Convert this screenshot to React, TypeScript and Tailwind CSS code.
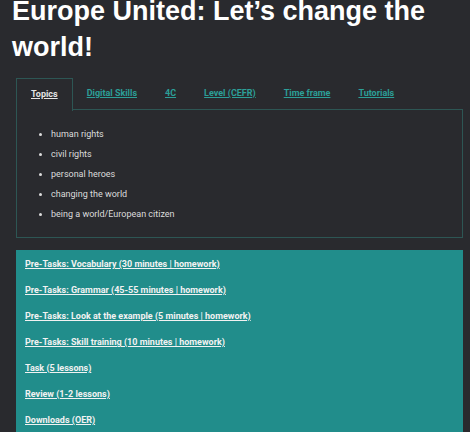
import React from "react";

const tabs = ["Topics", "Digital Skills", "4C", "Level (CEFR)", "Time frame", "Tutorials"];
const topics = [
  "human rights",
  "civil rights",
  "personal heroes",
  "changing the world",
  "being a world/European citizen",
];
const links = [
  "Pre-Tasks: Vocabulary (30 minutes | homework)",
  "Pre-Tasks: Grammar (45-55 minutes | homework)",
  "Pre-Tasks: Look at the example (5 minutes | homework)",
  "Pre-Tasks: Skill training (10 minutes | homework)",
  "Task (5 lessons)",
  "Review (1-2 lessons)",
  "Downloads (OER)",
];

export default function App() {
  return (
    <div
      className="w-[470px] h-[432px] overflow-hidden bg-[#292a2e]"
      style={{ fontFamily: "Roboto, 'Liberation Sans', sans-serif" }}
    >
      <h1
        className="-mt-[7px] pl-[12px] text-[27px] leading-[36px] font-bold text-white"
        style={{ fontFamily: "'Liberation Sans', Arial, sans-serif" }}
      >
        Europe United: Let’s change the world!
      </h1>
      <div className="mt-[13px] ml-[16px] w-[447px]">
        <div className="flex h-[32px] border-b border-[#2d5654]">
          {tabs.map((t, i) => (
            <div
              key={t}
              className={
                i === 0
                  ? "flex items-center px-[14px] border border-b-0 border-[#2d5654] bg-[#292a2e] -mb-px h-[33px]"
                  : "flex items-center px-[14px]"
              }
            >
              <span
                className={
                  "text-[9px] font-bold underline underline-offset-[1px] " +
                  (i === 0 ? "text-[#e4e4e4]" : "text-[#2c9f98]")
                }
              >
                {t}
              </span>
            </div>
          ))}
        </div>
        <div className="border border-t-0 border-[#2d5654] pt-[14px] pb-[13px] pl-[34px]">
          <ul className="list-disc text-[9px] leading-[20px] text-[#dcdcdc] marker:text-[#dcdcdc]">
            {topics.map((t) => (
              <li key={t}>{t}</li>
            ))}
          </ul>
        </div>
      </div>
      <div className="mt-[12px] ml-[16px] w-[447px] bg-[#218d8b] pt-[8px] pb-[20px] pl-[9px] flex flex-col gap-[14px]">
        {links.map((l) => (
          <span
            key={l}
            className="text-[9px] leading-[12px] font-bold text-[#f2f2f2] underline underline-offset-[1px]"
          >
            {l}
          </span>
        ))}
      </div>
    </div>
  );
}
